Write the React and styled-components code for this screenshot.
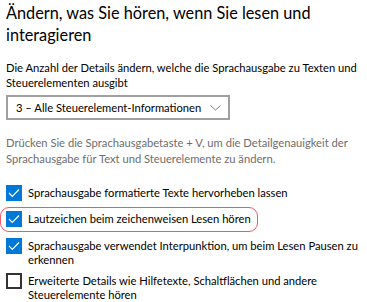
import React from "react";
import styled, { createGlobalStyle } from "styled-components";

const Global = createGlobalStyle`
  html, body { margin: 0; padding: 0; background: #fff; }
  body { font-family: Lato, "Noto Sans", sans-serif; color: #000; }
`;

const Page = styled.div`
  width: 367px;
  height: 302px;
  overflow: hidden;
  padding: 2px 6px 0 6px;
  box-sizing: border-box;
  display: flex;
  flex-direction: column;
`;

const Title = styled.h2`
  margin: 0;
  font-size: 16.3px;
  font-weight: 400;
  line-height: 22px;
`;

const Text = styled.p`
  margin: ${(p) => p.$mt || 0}px 0 0 0;
  font-size: 11.2px;
  line-height: ${(p) => (p.$muted ? 16 : 15)}px;
  color: ${(p) => (p.$muted ? "#6d6d6d" : "#000")};
`;

const Select = styled.div`
  margin-top: 5px;
  width: 224px;
  height: 26px;
  box-sizing: border-box;
  border: 2px solid #a0a0a0;
  display: flex;
  align-items: center;
  justify-content: space-between;
  padding: 0 7px 0 8px;
  font-size: 11.2px;
  white-space: nowrap;
`;

const List = styled.div`
  margin-top: 18px;
  display: flex;
  flex-direction: column;
  align-items: flex-start;
  gap: 6px;
`;

const Row = styled.label`
  display: flex;
  align-items: flex-start;
  gap: 6px;
  box-sizing: border-box;
  ${(p) =>
    p.$highlight &&
    `
    margin: 0 0 0 -6px;
    padding: 3px 6px 4px 5px;
    border: 1px solid #ec5a66;
    border-radius: 9px;
  `}
`;

const Box = styled.span`
  flex: none;
  width: 16px;
  height: 16px;
  box-sizing: border-box;
  background: ${(p) => (p.$checked ? "#0078d7" : "#fff")};
  border: ${(p) => (p.$checked ? "none" : "2px solid #333")};
  display: flex;
  align-items: center;
  justify-content: center;
`;

const Label = styled.span`
  font-size: 11.2px;
  line-height: 14px;
  padding-top: 1px;
`;

function Check({ checked }) {
  return (
    <Box $checked={checked}>
      {checked && (
        <svg width="12" height="10" viewBox="0 0 12 10">
          <polyline
            points="1,5 4.3,8.3 11,1.5"
            fill="none"
            stroke="#fff"
            strokeWidth="1.2"
          />
        </svg>
      )}
    </Box>
  );
}

const items = [
  { text: "Sprachausgabe formatierte Texte hervorheben lassen", checked: true },
  { text: "Lautzeichen beim zeichenweisen Lesen hören", checked: true, hl: true },
  {
    text: "Sprachausgabe verwendet Interpunktion, um beim Lesen Pausen zu erkennen",
    checked: true,
  },
  {
    text: "Erweiterte Details wie Hilfetexte, Schaltflächen und andere Steuerelemente hören",
    checked: false,
  },
];

export default function App() {
  return (
    <Page>
      <Global />
      <Title>Ändern, was Sie hören, wenn Sie lesen und interagieren</Title>
      <Text $mt={14}>
        Die Anzahl der Details ändern, welche die Sprachausgabe zu Texten und
        Steuerelementen ausgibt
      </Text>
      <Select>
        <span>3 – Alle Steuerelement-Informationen</span>
        <svg width="11" height="6" viewBox="0 0 11 6">
          <polyline points="0.5,0.5 5.5,5 10.5,0.5" fill="none" stroke="#7a7a7a" strokeWidth="1" />
        </svg>
      </Select>
      <Text $mt={15} $muted>
        Drücken Sie die Sprachausgabetaste + V, um die Detailgenauigkeit der
        Sprachausgabe für Text und Steuerelemente zu ändern.
      </Text>
      <List>
        {items.map((it, i) => (
          <Row key={i} $highlight={it.hl}>
            <Check checked={it.checked} />
            <Label>{it.text}</Label>
          </Row>
        ))}
      </List>
    </Page>
  );
}
